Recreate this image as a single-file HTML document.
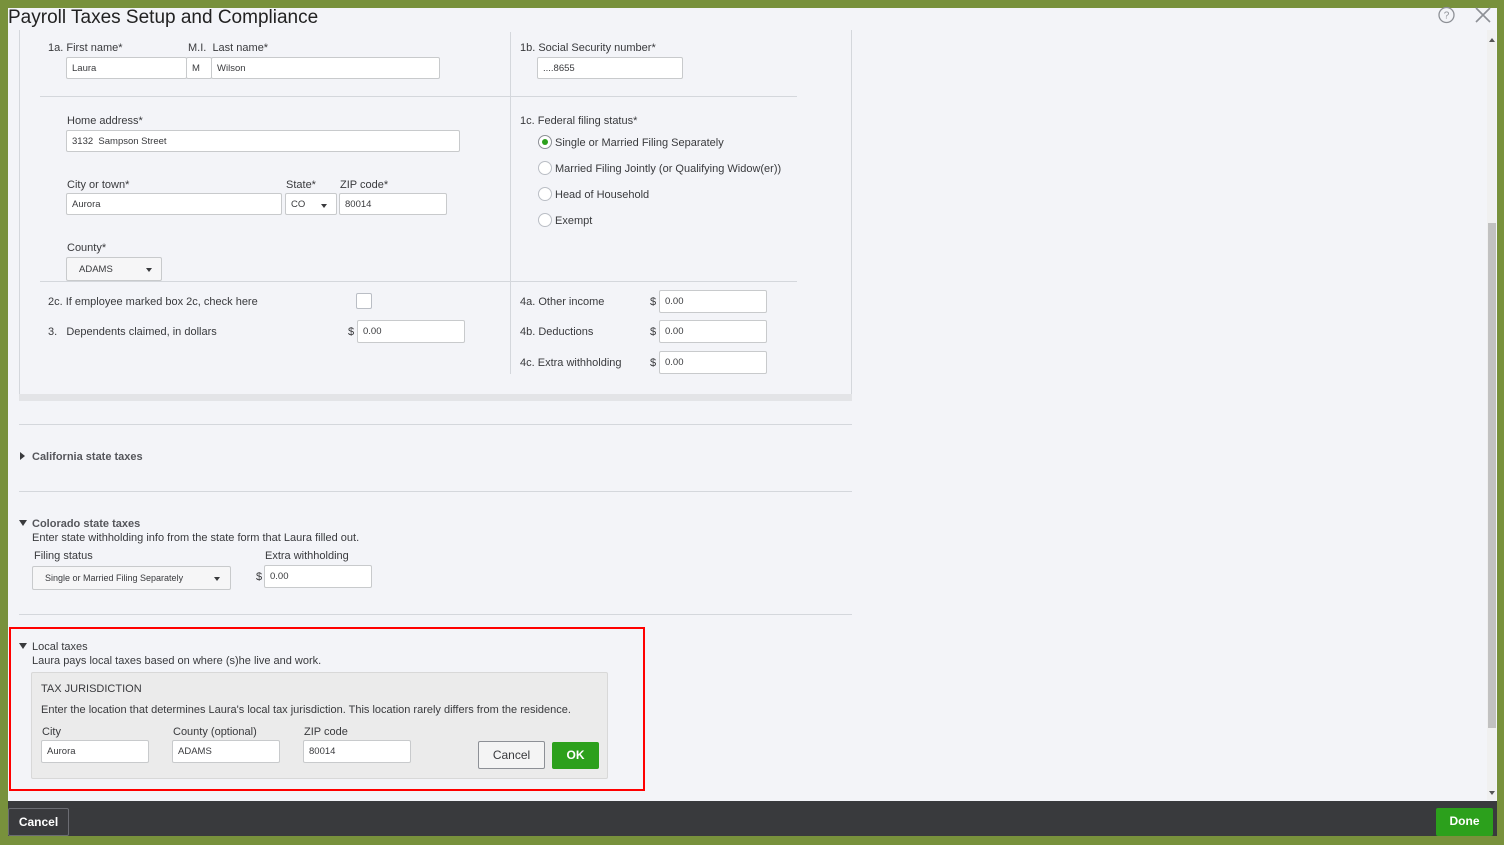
<!DOCTYPE html>
<html><head><meta charset="utf-8"><style>
*{box-sizing:border-box;margin:0;padding:0}
body{width:1504px;height:845px;overflow:hidden;background:#78913c;font-family:"Liberation Sans",sans-serif;color:#393a3d;position:relative}
.a{position:absolute}
.t{position:absolute;font-size:11px;line-height:14px;white-space:nowrap;margin-top:1px}
.in{position:absolute;background:#fff;border:1px solid #c8cacc;border-radius:2px;font-size:9.5px;padding-left:5px;color:#393a3d;display:flex;align-items:center}
.hl{position:absolute;height:1px;background:#d4d7dc}
.vl{position:absolute;width:1px;background:#d4d7dc}
.rad{position:absolute;width:14px;height:14px;border-radius:50%;border:1px solid #babec5;background:#fff}
.car{position:absolute;width:0;height:0;border-left:3px solid transparent;border-right:3px solid transparent;border-top:4px solid #393a3d}
.b{font-weight:bold;color:#55565b}
</style></head><body>
<div class="a" style="left:8px;top:8px;width:1489px;height:828px;background:#f3f4f8"></div>
<div class="t" style="left:8px;top:6px;font-size:19px;line-height:22px;color:#222">Payroll Taxes Setup and Compliance</div>
<svg class="a" style="left:1437px;top:6px" width="20" height="18"><circle cx="9.5" cy="9" r="7.5" fill="none" stroke="#8d9096" stroke-width="1.3"/><text x="9.5" y="12.5" font-size="10" text-anchor="middle" fill="#8d9096" font-family="Liberation Sans">?</text></svg>
<svg class="a" style="left:1474px;top:6px" width="18" height="18"><path d="M2 2L16 16M16 2L2 16" stroke="#8d9096" stroke-width="1.6"/></svg>
<div class="a" style="left:1487px;top:30px;width:9px;height:770px;background:#f0f0f0"></div>
<div class="a" style="left:1488px;top:223px;width:8px;height:505px;background:#c1c1c1"></div>
<div class="car" style="left:1489px;top:38px;border-top:none;border-bottom:4px solid #555"></div>
<div class="car" style="left:1489px;top:791px;border-top-color:#555"></div>

<div class="a" style="left:19px;top:30px;width:833px;height:365px;border-left:1px solid #d4d7dc;border-right:1px solid #d4d7dc"></div>
<div class="a" style="left:19px;top:394px;width:833px;height:7px;background:#e3e4e7"></div>
<div class="hl" style="left:40px;top:96px;width:757px"></div>
<div class="hl" style="left:40px;top:281px;width:757px"></div>
<div class="vl" style="left:510px;top:32px;height:342px"></div>

<div class="t" style="left:48px;top:40px">1a. First name*</div>
<div class="t" style="left:188px;top:40px">M.I.&nbsp; Last name*</div>
<div class="in" style="left:66px;top:57px;width:121px;height:22px">Laura</div>
<div class="in" style="left:186px;top:57px;width:26px;height:22px">M</div>
<div class="in" style="left:211px;top:57px;width:229px;height:22px">Wilson</div>
<div class="t" style="left:520px;top:40px">1b. Social Security number*</div>
<div class="in" style="left:537px;top:57px;width:146px;height:22px">....8655</div>

<div class="t" style="left:67px;top:113px">Home address*</div>
<div class="in" style="left:66px;top:130px;width:394px;height:22px">3132&nbsp; Sampson Street</div>
<div class="t" style="left:67px;top:177px">City or town*</div>
<div class="t" style="left:286px;top:177px">State*</div>
<div class="t" style="left:340px;top:177px">ZIP code*</div>
<div class="in" style="left:66px;top:193px;width:216px;height:22px">Aurora</div>
<div class="in" style="left:285px;top:193px;width:52px;height:22px">CO</div>
<div class="car" style="left:321px;top:204px"></div>
<div class="in" style="left:339px;top:193px;width:108px;height:22px">80014</div>
<div class="t" style="left:67px;top:240px">County*</div>
<div class="in" style="left:66px;top:257px;width:96px;height:24px;padding-left:12px;background:#f6f6f7">ADAMS</div>
<div class="car" style="left:146px;top:268px"></div>

<div class="t" style="left:520px;top:113px">1c. Federal filing status*</div>
<div class="rad" style="left:538px;top:135px;border-color:#8d9096"></div><div class="a" style="left:542px;top:139px;width:6px;height:6px;border-radius:50%;background:#2ca01c"></div>
<div class="t" style="left:555px;top:135px">Single or Married Filing Separately</div>
<div class="rad" style="left:538px;top:161px"></div><div class="t" style="left:555px;top:161px">Married Filing Jointly (or Qualifying Widow(er))</div>
<div class="rad" style="left:538px;top:187px"></div><div class="t" style="left:555px;top:187px">Head of Household</div>
<div class="rad" style="left:538px;top:213px"></div><div class="t" style="left:555px;top:213px">Exempt</div>

<div class="t" style="left:48px;top:294px">2c. If employee marked box 2c, check here</div>
<div class="a" style="left:356px;top:293px;width:16px;height:16px;border:1px solid #babec5;background:#fff;border-radius:2px"></div>
<div class="t" style="left:48px;top:324px">3.&nbsp;&nbsp; Dependents claimed, in dollars</div>
<div class="t" style="left:348px;top:324px">$</div>
<div class="in" style="left:357px;top:320px;width:108px;height:23px">0.00</div>

<div class="t" style="left:520px;top:294px">4a. Other income</div>
<div class="t" style="left:520px;top:324px">4b. Deductions</div>
<div class="t" style="left:520px;top:355px">4c. Extra withholding</div>
<div class="t" style="left:650px;top:294px">$</div><div class="in" style="left:659px;top:290px;width:108px;height:23px">0.00</div>
<div class="t" style="left:650px;top:324px">$</div><div class="in" style="left:659px;top:320px;width:108px;height:23px">0.00</div>
<div class="t" style="left:650px;top:355px">$</div><div class="in" style="left:659px;top:351px;width:108px;height:23px">0.00</div>

<div class="hl" style="left:19px;top:424px;width:833px"></div>
<div class="a" style="left:20px;top:452px;width:0;height:0;border-top:4px solid transparent;border-bottom:4px solid transparent;border-left:5px solid #393a3d"></div>
<div class="t b" style="left:32px;top:449px">California state taxes</div>
<div class="hl" style="left:19px;top:491px;width:833px"></div>

<div class="a" style="left:19px;top:520px;border-left:4px solid transparent;border-right:4px solid transparent;border-top:6px solid #393a3d"></div>
<div class="t b" style="left:32px;top:516px">Colorado state taxes</div>
<div class="t" style="left:32px;top:530px">Enter state withholding info from the state form that Laura filled out.</div>
<div class="t" style="left:34px;top:548px">Filing status</div>
<div class="t" style="left:265px;top:548px">Extra withholding</div>
<div class="in" style="left:32px;top:566px;width:199px;height:24px;padding-left:12px;font-size:9px;background:#f6f6f7">Single or Married Filing Separately</div>
<div class="car" style="left:214px;top:577px"></div>
<div class="t" style="left:256px;top:569px">$</div>
<div class="in" style="left:264px;top:565px;width:108px;height:23px">0.00</div>
<div class="hl" style="left:19px;top:614px;width:833px"></div>

<div class="a" style="left:9px;top:627px;width:636px;height:164px;border:2px solid #f00"></div>
<div class="a" style="left:19px;top:643px;border-left:4px solid transparent;border-right:4px solid transparent;border-top:6px solid #393a3d"></div>
<div class="t" style="left:32px;top:639px">Local taxes</div>
<div class="t" style="left:32px;top:653px">Laura pays local taxes based on where (s)he live and work.</div>
<div class="a" style="left:31px;top:672px;width:577px;height:107px;background:#ebebeb;border:1px solid #d8d8d8;border-radius:2px"></div>
<div class="t" style="left:41px;top:681px">TAX JURISDICTION</div>
<div class="t" style="left:41px;top:702px">Enter the location that determines Laura's local tax jurisdiction. This location rarely differs from the residence.</div>
<div class="t" style="left:42px;top:724px">City</div>
<div class="t" style="left:173px;top:724px">County (optional)</div>
<div class="t" style="left:304px;top:724px">ZIP code</div>
<div class="in" style="left:41px;top:740px;width:108px;height:23px">Aurora</div>
<div class="in" style="left:172px;top:740px;width:108px;height:23px">ADAMS</div>
<div class="in" style="left:303px;top:740px;width:108px;height:23px">80014</div>
<div class="a" style="left:478px;top:741px;width:67px;height:28px;border:1px solid #8d9096;border-radius:2px;background:#f4f4f4;font-size:12px;line-height:26px;text-align:center">Cancel</div>
<div class="a" style="left:552px;top:742px;width:47px;height:27px;background:#2ca01c;border-radius:2px;color:#fff;font-weight:bold;font-size:12px;line-height:27px;text-align:center">OK</div>

<div class="a" style="left:8px;top:801px;width:1489px;height:35px;background:#393a3d"></div>
<div class="a" style="left:8px;top:808px;width:61px;height:28px;border:1px solid #6b6c72;border-radius:2px;color:#fff;font-weight:bold;font-size:12px;line-height:26px;text-align:center">Cancel</div>
<div class="a" style="left:1436px;top:808px;width:57px;height:28px;background:#2ca01c;border-radius:2px;color:#fff;font-weight:bold;font-size:12px;line-height:27px;text-align:center">Done</div>
</body></html>
